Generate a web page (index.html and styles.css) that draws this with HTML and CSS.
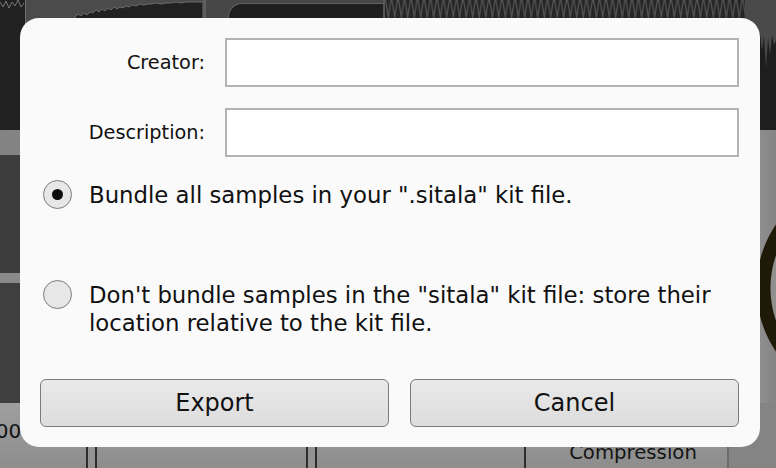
FILE: index.html
```html
<!DOCTYPE html>
<html lang="en">
<head>
<meta charset="utf-8">
<title>Export kit</title>
<link rel="stylesheet" href="styles.css">
</head>
<body>
<div class="app">
  <div class="wave-row">
    <div class="wv wv-a">
      <svg width="25" height="130" viewBox="0 0 25 130"><polyline points="0,2 3,7 6,1 9,8 12,2 15,6 18,0 21,7 24,3" fill="none" stroke="#777" stroke-width="1"/></svg>
    </div>
    <div class="wv wv-sep"></div>
    <div class="wv wv-b">
      <svg width="177" height="130" viewBox="0 0 177 130"><polygon points="49,17 52,14 55,16 58,13 61,15 64,12 67,13 70,10 73,12 76,9 79,11 82,8 85,10 88,7 91,9 94,7 97,8 100,6 103,7 106,5 110,6 114,4 118,5 122,4 126,4 130,3 135,4 140,3 145,3 150,2 155,3 160,2 165,2 170,2 177,2 177,130 49,130" fill="#212121" stroke="#6a6a6a" stroke-width="1"/></svg>
    </div>
    <div class="wv wv-sep2"></div>
    <div class="wv wv-c"><div class="wv-c-inner"></div></div>
    <div class="wv wv-d">
      <svg width="360" height="130" viewBox="0 0 360 130">
        <defs>
          <pattern id="zig" width="6.5" height="130" patternUnits="userSpaceOnUse">
            <path d="M0.5,0 L3.25,17 L6,0 M3.25,17 L3.25,60" fill="none" stroke="#5a5a5a" stroke-width="1.1"/>
          </pattern>
        </defs>
        <rect width="360" height="130" fill="#262626"/>
        <rect width="360" height="130" fill="url(#zig)"/>
      </svg>
    </div>
    <div class="wv wv-e">
      <svg width="31" height="130" viewBox="0 0 31 130"><polygon points="0,0 31,0 31,40 29,45 27,35 25,55 23,38 21,68 19,36 17,50 15,33 0,33" fill="#4a4a4a"/></svg>
    </div>
  </div>
  <div class="mid">
    <div class="mid-left">
      <div class="strip strip-light"></div>
      <div class="strip strip-dark1"></div>
      <div class="strip strip-light2"></div>
      <div class="strip strip-dark2"></div>
    </div>
    <div class="mid-right"></div>
  </div>
  <div class="bottom-row">
    <div class="cell cell-a"><span class="cell-num">100</span></div>
    <div class="cell-gap"></div>
    <div class="cell cell-b"></div>
    <div class="cell-gap"></div>
    <div class="cell cell-c"></div>
    <div class="cell cell-d"><span class="cell-title">Compression</span></div>
    <div class="cell cell-e"></div>
  </div>
</div>

<div class="dialog">
  <div class="field">
    <label class="field-label" for="creator">Creator:</label>
    <input class="field-input" id="creator" type="text">
  </div>
  <div class="field">
    <label class="field-label" for="description">Description:</label>
    <input class="field-input" id="description" type="text">
  </div>
  <div class="option option-first">
    <span class="radio checked"></span>
    <span class="option-text">Bundle all samples in your ".sitala" kit file.</span>
  </div>
  <div class="option option-second">
    <span class="radio"></span>
    <span class="option-text">Don't bundle samples in the "sitala" kit file: store their location relative to the kit file.</span>
  </div>
  <div class="buttons">
    <button class="btn btn-export" type="button">Export</button>
    <button class="btn btn-cancel" type="button">Cancel</button>
  </div>
</div>
</body>
</html>
```

FILE: styles.css
```css
html, body {
  margin: 0;
  padding: 0;
}

body {
  width: 776px;
  height: 468px;
  overflow: hidden;
  position: relative;
  background: #8e8e8e;
  font-family: "DejaVu Sans", "Liberation Sans", sans-serif;
}

/* ---------- background application ---------- */
.app {
  display: flex;
  flex-direction: column;
  height: 468px;
}

.wave-row {
  display: flex;
  height: 130px;
}

.wv {
  height: 130px;
  flex: none;
}

.wv svg {
  display: block;
}

.wv-a {
  width: 25px;
  background: #212121;
}

.wv-sep {
  width: 1px;
  background: #707070;
}

.wv-b {
  width: 177px;
  background: #4b4b4b;
}

.wv-sep2 {
  width: 3px;
  background: #5e5e5e;
}

.wv-c {
  width: 179px;
  box-sizing: border-box;
  padding: 3px 0 0 22px;
  background: #474747;
  border-right: 2px solid #555555;
}

.wv-c-inner {
  height: 100%;
  background: #1f1f1f;
  border-top: 1px solid #606060;
  border-left: 1px solid #606060;
  border-top-left-radius: 14px;
}

.wv-d {
  width: 360px;
}

.wv-e {
  width: 31px;
  background: #1e1e1e;
}

.mid {
  display: flex;
  height: 273px;
}

.mid-left {
  width: 740px;
  display: flex;
  flex-direction: column;
}

.strip-light {
  height: 25px;
  background: linear-gradient(90deg, #838383, #969696);
}

.strip-dark1 {
  height: 118px;
  background: #3d3d3d;
}

.strip-light2 {
  height: 10px;
  background: #8a8a8a;
}

.strip-dark2 {
  flex: 1;
  background: #3f3f3f;
}

.mid-right {
  flex: 1;
  background:
    radial-gradient(circle at 130px 158px, #8f8f8f 0 99px, #1f1a07 100px 113px, transparent 114px),
    linear-gradient(90deg, #9a9a9a, #848484);
}

.bottom-row {
  display: flex;
  height: 65px;
  background: #929292;
}

.cell {
  box-sizing: border-box;
  height: 65px;
  background: linear-gradient(#9f9f9f, #8d8d8d);
  flex: none;
}

.cell-gap {
  width: 7px;
  flex: none;
}

.cell-a {
  width: 88px;
  border-right: 2px solid #2c2c2c;
  padding-top: 16px;
  font-size: 20px;
  line-height: 24px;
  color: #111;
  white-space: nowrap;
  overflow: hidden;
}

.cell-num {
  display: block;
  text-indent: -17px;
}

.cell-b {
  width: 213px;
  border-left: 2px solid #2c2c2c;
  border-right: 2px solid #2c2c2c;
}

.cell-c {
  width: 211px;
  border-left: 2px solid #2c2c2c;
  border-right: 2px solid #2c2c2c;
}

.cell-d {
  width: 203px;
  border-right: 2px solid #6c6c6c;
  padding: 38px 0 0 13px;
  text-align: center;
  font-size: 19.7px;
  line-height: 24px;
  color: #151515;
}

.cell-e {
  flex: 1;
  background: #848484;
}

/* ---------- dialog ---------- */
.dialog {
  position: absolute;
  left: 20px;
  top: 18px;
  width: 740px;
  height: 429px;
  box-sizing: border-box;
  padding: 20px 21px 20px 20px;
  background: #fafafa;
  border-radius: 19px;
  display: flex;
  flex-direction: column;
  color: #111;
}

.field {
  display: flex;
  align-items: center;
  gap: 20px;
  height: 49px;
}

.field + .field {
  margin-top: 21px;
}

.field-label {
  width: 165px;
  flex: none;
  text-align: right;
  font-size: 19.3px;
}

.field-input {
  flex: 1;
  height: 49px;
  box-sizing: border-box;
  margin: 0;
  padding: 0 8px;
  border: 2px solid #b3b3b3;
  border-radius: 0;
  background: #ffffff;
  font: inherit;
  font-size: 19px;
  outline: none;
}

.option {
  display: flex;
  align-items: flex-start;
  gap: 17px;
  padding-left: 3px;
  font-size: 22.8px;
  line-height: 28px;
}

.option-first {
  margin-top: 24px;
}

.option-second {
  margin-top: 72px;
}

.radio {
  width: 29px;
  height: 29px;
  flex: none;
  box-sizing: border-box;
  margin-top: -1px;
  border-radius: 50%;
  border: 1.5px solid #7a7a7a;
  background: #e7e7e7;
  display: flex;
  align-items: center;
  justify-content: center;
}

.radio.checked::after {
  content: "";
  width: 11px;
  height: 11px;
  border-radius: 50%;
  background: #0d0d0d;
}

.buttons {
  margin-top: auto;
  display: flex;
  gap: 21px;
}

.btn {
  height: 48px;
  margin: 0;
  padding: 0;
  border: 1px solid #7b7b7b;
  border-radius: 6px;
  background: linear-gradient(#e9e9e9, #dddddd);
  font-family: "DejaVu Sans", "Liberation Sans", sans-serif;
  font-size: 24px;
  color: #111;
}

.btn-export {
  width: 349px;
  flex: none;
}

.btn-cancel {
  flex: 1;
}
```
